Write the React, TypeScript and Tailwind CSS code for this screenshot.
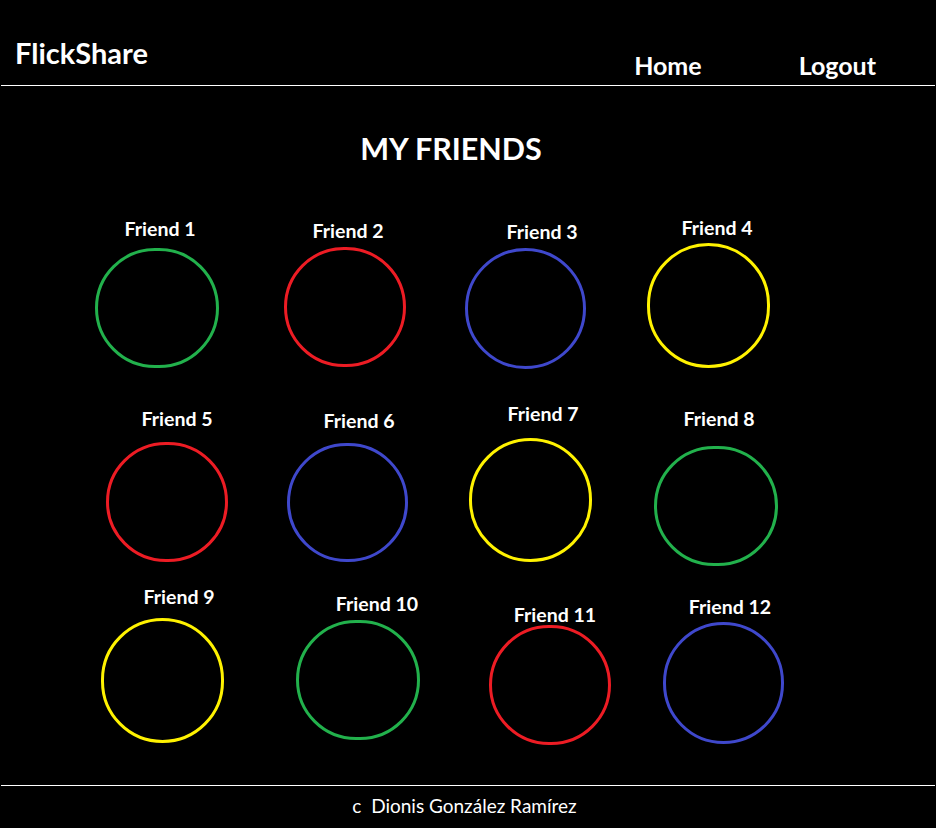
const friends = [
  [
    { name: "Friend 1", color: "border-[#22b14c]", label: "mt-[9px] ml-[45px]", circle: "mt-[9px] ml-[30px] w-[124px] h-[120px]" },
    { name: "Friend 2", color: "border-[#ed1c24]", label: "mt-[11px] ml-[48px]", circle: "mt-[6px] ml-[34px] w-[122px] h-[120px]" },
    { name: "Friend 3", color: "border-[#3f48cc]", label: "mt-[12px] ml-[57px]", circle: "mt-[6px] ml-[30px] w-[121px] h-[121px]" },
    { name: "Friend 4", color: "border-[#fff200]", label: "mt-[8px] ml-[47px]", circle: "mt-[5px] ml-[27px] w-[123px] h-[125px]" },
  ],
  [
    { name: "Friend 5", color: "border-[#ed1c24]", label: "mt-[9px] ml-[62px]", circle: "mt-[13px] ml-[41px] w-[122px] h-[120px]" },
    { name: "Friend 6", color: "border-[#3f48cc]", label: "mt-[11px] ml-[59px]", circle: "mt-[12px] ml-[37px] w-[121px] h-[119px]" },
    { name: "Friend 7", color: "border-[#fff200]", label: "mt-[4px] ml-[58px]", circle: "mt-[14px] ml-[34px] w-[123px] h-[124px]" },
    { name: "Friend 8", color: "border-[#22b14c]", label: "mt-[9px] ml-[49px]", circle: "mt-[17px] ml-[34px] w-[124px] h-[120px]" },
  ],
  [
    { name: "Friend 9", color: "border-[#fff200]", label: "mt-[7px] ml-[64px]", circle: "mt-[11px] ml-[36px] w-[123px] h-[125px]" },
    { name: "Friend 10", color: "border-[#22b14c]", label: "mt-[14px] ml-[77px]", circle: "mt-[6px] ml-[46px] w-[124px] h-[120px]" },
    { name: "Friend 11", color: "border-[#ed1c24]", label: "mt-[25px] ml-[70px]", circle: "mt-[0px] ml-[54px] w-[122px] h-[120px]" },
    { name: "Friend 12", color: "border-[#3f48cc]", label: "mt-[17px] ml-[60px]", circle: "mt-[5px] ml-[43px] w-[121px] h-[122px]" },
  ],
];

const rowHeights = ["h-[190px]", "h-[180px]", "h-[175px]"];

function FriendCard({ name, color, label, circle }: { name: string; color: string; label: string; circle: string }) {
  return (
    <div className="w-[185px] flex flex-col items-start">
      <div className={`w-[100px] text-center text-[19.5px] leading-[20px] font-bold whitespace-nowrap ${label}`}>{name}</div>
      <div className={`rounded-full border-[3px] ${color} ${circle}`} />
    </div>
  );
}

export default function App() {
  return (
    <div
      className="w-[936px] h-[828px] bg-black text-white flex flex-col overflow-hidden"
      style={{ fontFamily: "Lato, 'Open Sans', sans-serif" }}
    >
      <header className="h-[86px] flex items-start border-b border-white mx-[1px]">
        <h1 className="pl-[14px] pt-[36px] text-[29px] leading-[34px] font-bold">FlickShare</h1>
        <nav className="ml-auto flex gap-[97px] pr-[59px] pt-[50px] text-[25px] leading-[30px] font-bold">
          <a>Home</a>
          <a>Logout</a>
        </nav>
      </header>

      <main className="flex-1 flex flex-col">
        <h2 className="text-center pt-[44px] pb-[44px] text-[30.5px] leading-[36px] font-bold pr-[34px]">MY FRIENDS</h2>
        <div className="flex flex-col pl-[65px]">
          {friends.map((row, i) => (
            <div key={i} className={`flex ${rowHeights[i]}`}>
              {row.map((f) => (
                <FriendCard key={f.name} {...f} />
              ))}
            </div>
          ))}
        </div>
      </main>

      <footer className="h-[43px] border-t border-white mx-[1px] flex justify-center pr-[7px] pt-[9px] text-[19px] leading-[22px]">
        c&nbsp;&nbsp;Dionis González Ramírez
      </footer>
    </div>
  );
}
